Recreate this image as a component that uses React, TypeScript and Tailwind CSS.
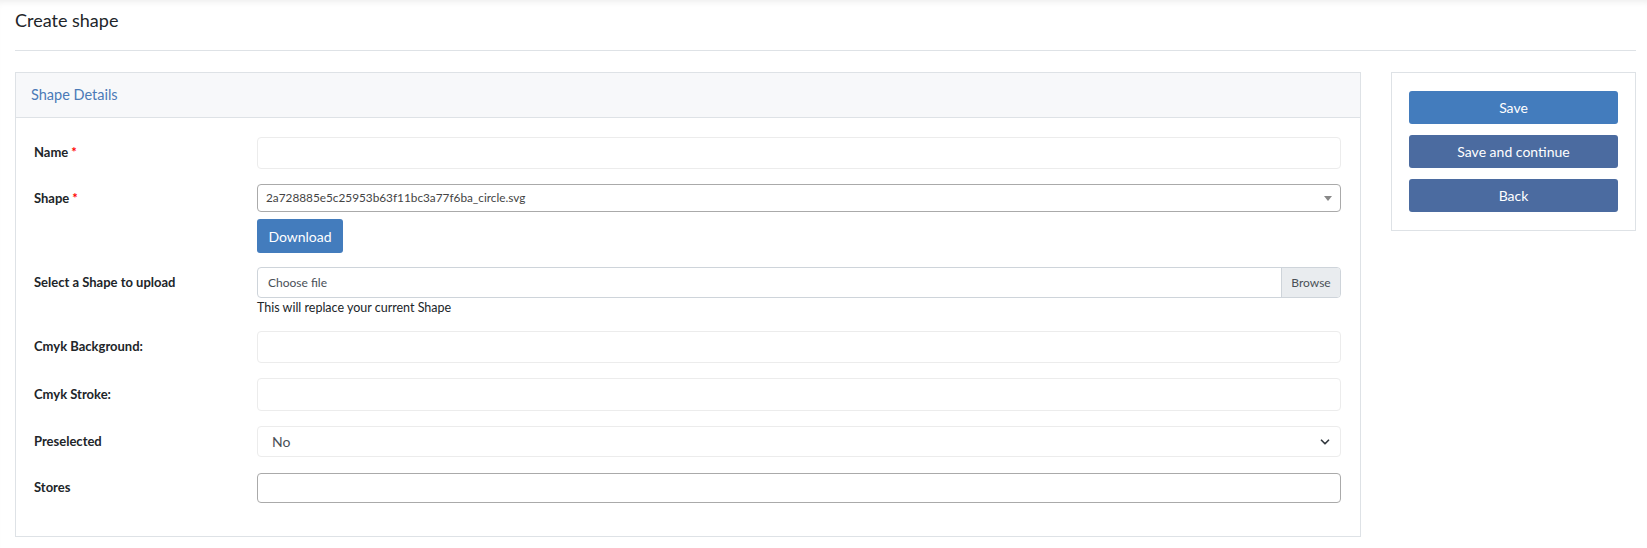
import React from "react";
import { ChevronDown } from "lucide-react";

const font = { fontFamily: "Lato, 'Open Sans', sans-serif" };

function Label({ text, required, h = "h-[32px]" }: { text: string; required?: boolean; h?: string }) {
  return (
    <div className={`w-[223px] shrink-0 flex items-center ${h} text-[13px] font-bold text-[#212529]`}>
      {text}
      {required && <span className="text-[#ff0000] ml-[3px]">*</span>}
    </div>
  );
}

function FaintInput({ h = "h-[32px]" }: { h?: string }) {
  return <div className={`flex-1 ${h} border border-[#ececec] rounded-[4px] bg-white`} />;
}

export default function App() {
  return (
    <div className="min-h-[548px] bg-white shadow-[inset_0_6px_6px_-4px_rgba(0,0,0,0.07)]" style={font}>
      <div className="pl-[15px] pr-[11px] pt-[7px]">
        <h1 className="text-[18px] leading-[26px] text-[#212529]">Create shape</h1>
        <hr className="mt-[17px] border-0 border-t border-[#dee2e6]" />

        <div className="flex items-start mt-[21px]">
          {/* main panel */}
          <section className="flex-1 border border-[#dee2e6]">
            <div className="h-[45px] flex items-center px-[15px] bg-[#f7f8fa] border-b border-[#dee2e6]">
              <h2 className="text-[14.5px] text-[#4a7ab7]">Shape Details</h2>
            </div>

            <div className="pt-[19px] pl-[18px] pr-[19px] pb-[18px]">
              <div className="flex mb-[15px]">
                <Label text="Name" required />
                <FaintInput />
              </div>

              <div className="flex mb-[14px]">
                <Label text="Shape" required h="h-[30px]" />
                <div className="flex-1">
                  <div className="h-[28px] flex items-center justify-between border border-[#aaaaaa] rounded-[4px] pl-[8px] pr-[8px]">
                    <span className="text-[11.8px] text-[#444]">2a728885e5c25953b63f11bc3a77f6ba_circle.svg</span>
                    <span className="w-0 h-0 border-l-[4px] border-r-[4px] border-t-[5px] border-l-transparent border-r-transparent border-t-[#888]" />
                  </div>
                  <button className="mt-[7px] h-[34px] w-[86px] rounded-[3px] bg-[#437cbd] text-white text-[14px]">
                    Download
                  </button>
                </div>
              </div>

              <div className="flex mb-[14px]">
                <Label text="Select a Shape to upload" h="h-[31px]" />
                <div className="flex-1">
                  <div className="h-[31px] flex border border-[#ced4da] rounded-[4px] overflow-hidden">
                    <span className="flex-1 flex items-center pl-[10px] text-[12px] text-[#495057]">Choose file</span>
                    <span className="w-[59px] flex items-center justify-center bg-[#e9ecef] border-l border-[#ced4da] text-[12px] text-[#495057]">
                      Browse
                    </span>
                  </div>
                  <p className="text-[12.5px] leading-[18px] mt-[1px] text-[#212529]">This will replace your current Shape</p>
                </div>
              </div>

              <div className="flex mb-[15px]">
                <Label text="Cmyk Background:" />
                <FaintInput />
              </div>

              <div className="flex mb-[15px]">
                <Label text="Cmyk Stroke:" h="h-[33px]" />
                <FaintInput h="h-[33px]" />
              </div>

              <div className="flex mb-[16px]">
                <Label text="Preselected" h="h-[31px]" />
                <div className="flex-1 h-[31px] flex items-center justify-between border border-[#ececec] rounded-[4px] pl-[14px] pr-[8px]">
                  <span className="text-[14px] text-[#495057]">No</span>
                  <ChevronDown size={14} strokeWidth={3} className="text-[#343a40]" />
                </div>
              </div>

              <div className="flex mb-[15px]">
                <Label text="Stores" h="h-[30px]" />
                <div className="flex-1 h-[30px] border border-[#aaaaaa] rounded-[4px]" />
              </div>
            </div>
          </section>

          {/* actions */}
          <aside className="w-[245px] ml-[30px] border border-[#dee2e6] px-[17px] pt-[18px] pb-[18px] flex flex-col gap-[11px]">
            <button className="h-[33px] rounded-[3px] bg-[#437cbd] text-white text-[14px]">Save</button>
            <button className="h-[33px] rounded-[3px] bg-[#4b6ba0] text-white text-[14px]">Save and continue</button>
            <button className="h-[33px] rounded-[3px] bg-[#4b6ba0] text-white text-[14px]">Back</button>
          </aside>
        </div>
      </div>
    </div>
  );
}
